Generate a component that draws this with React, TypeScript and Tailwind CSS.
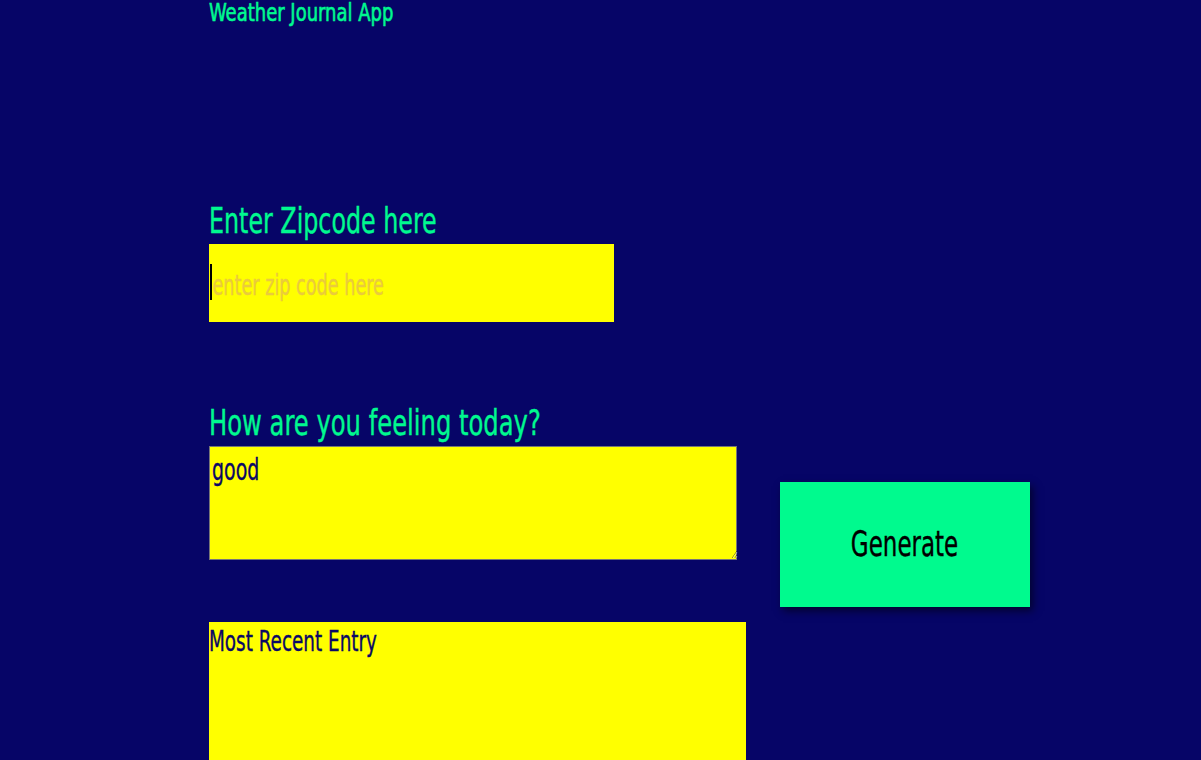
import React from "react";

const F = "font-['DejaVu_Sans_Condensed','DejaVu_Sans',sans-serif] font-stretch-condensed";

export default function App() {
  return (
    <div className={`min-h-[760px] bg-[#060567] ${F} [-webkit-text-stroke:0.35px_currentColor] overflow-hidden`}>
      <div className="ml-[209px] flex flex-col">
        <h1 className="text-[#00f98f] text-[25px] leading-[26px] font-normal whitespace-nowrap [-webkit-text-stroke:0.6px_currentColor]">
          <span className="inline-block origin-left scale-x-[0.8]">Weather Journal App</span>
        </h1>
        <div className="mt-[172px] flex flex-col">
          <label className="text-[#00f98f] text-[35px] leading-[46px] whitespace-nowrap">
            <span className="inline-block origin-left scale-x-[0.755]">Enter Zipcode here</span>
          </label>
          <div className="relative w-[405px] h-[78px] bg-[#ffff00]">
            <input
              className={`w-[579px] h-[78px] origin-left scale-x-[0.7] bg-transparent pl-[5px] pt-[5px] text-[28px] text-[#0a0866] outline-none placeholder:text-[#ebcb3c] ${F}`}
              placeholder="enter zip code here"
            />
            <span className="absolute left-[1px] top-[20px] w-[2px] h-[36px] bg-black" />
          </div>
        </div>
        <div className="mt-[78px] flex items-start">
          <div className="flex flex-col">
            <label className="text-[#00f98f] text-[35px] leading-[46px] whitespace-nowrap">
              <span className="inline-block origin-left scale-x-[0.77]">How are you feeling today?</span>
            </label>
            <div className="w-[528px] h-[114px] bg-[#ffff00] border border-[#767676]">
              <textarea
                className={`block w-[776px] h-[112px] origin-left scale-x-[0.68] bg-transparent pl-[3px] pt-[4px] text-[31px] leading-[36px] text-[#0a0866] outline-none ${F}`}
                defaultValue="good"
              />
            </div>
          </div>
          <button className="ml-[43px] mt-[82px] w-[250px] h-[125px] bg-[#00fa8e] text-black text-[35px] shadow-[3px_4px_8px_rgba(0,0,0,0.55)] whitespace-nowrap">
            <span className="inline-block scale-x-[0.73]">Generate</span>
          </button>
        </div>
        <div className="mt-[15px] w-[537px] h-[160px] bg-[#ffff00] text-[#0a0866] text-[28px] leading-[40px] whitespace-nowrap">
          <span className="inline-block origin-left scale-x-[0.73]">Most Recent Entry</span>
        </div>
      </div>
    </div>
  );
}
